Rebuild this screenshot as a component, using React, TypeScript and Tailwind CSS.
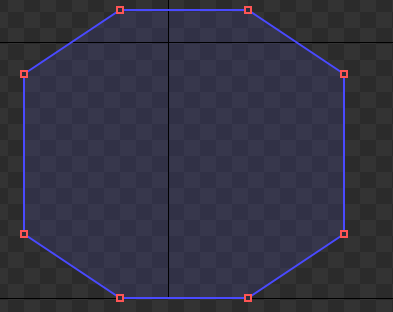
const points: [number, number][] = [
  [120, 10],
  [248, 10],
  [344, 74],
  [344, 234],
  [248, 298],
  [120, 298],
  [24, 234],
  [24, 74],
]

export default function App() {
  const poly = points.map((p) => p.join(',')).join(' ')
  return (
    <div className="relative h-[312px] w-[393px] overflow-hidden bg-[#2c2c2c] bg-[conic-gradient(#333333_25%,#2b2b2b_0_50%,#333333_0_75%,#2b2b2b_0)] bg-size-[32px_32px] bg-position-[8px_12px]">
      <svg className="absolute inset-0" width={393} height={312} viewBox="0 0 393 312">
        <polygon points={poly} fill="rgba(72,72,170,0.22)" />
        <line x1={168.5} y1={0} x2={168.5} y2={298} stroke="#000" strokeWidth={1} />
        <line x1={0} y1={42.5} x2={393} y2={42.5} stroke="#000" strokeWidth={1} />
        <line x1={0} y1={298.5} x2={393} y2={298.5} stroke="#000" strokeWidth={1} />
        <polygon points={poly} fill="none" stroke="#4a4aff" strokeWidth={2} />
        {points.map(([x, y], i) => (
          <rect
            key={i}
            x={x - 3}
            y={y - 3}
            width={6}
            height={6}
            fill="#2e2e3a"
            stroke="#ff5555"
            strokeWidth={2}
          />
        ))}
      </svg>
    </div>
  )
}
